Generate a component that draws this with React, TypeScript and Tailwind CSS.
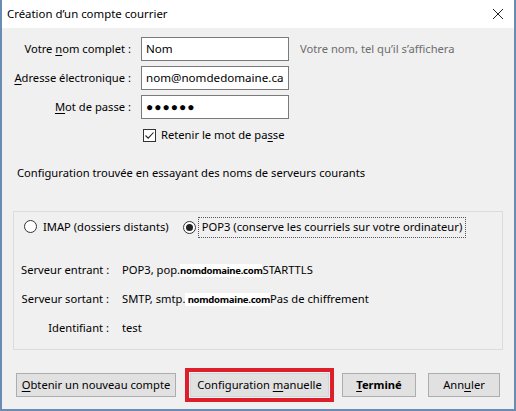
import React from 'react';

const U: React.FC<{ children: React.ReactNode }> = ({ children }) => (
  <span className="underline underline-offset-2">{children}</span>
);

const Field: React.FC<{ value: string; password?: boolean }> = ({ value, password }) => (
  <div className="h-[24px] w-[148px] bg-white border border-[#7a7a7a] flex items-center px-[4px] text-black text-[11.6px] whitespace-nowrap overflow-hidden">
    {password ? <span className="tracking-[1px] text-[12px] leading-none">●●●●●●</span> : value}
  </div>
);

const Btn: React.FC<{ children: React.ReactNode; className?: string }> = ({ children, className }) => (
  <div
    className={`h-[24px] flex items-center justify-center bg-[#e1e1e1] border border-[#adadad] text-black whitespace-nowrap ${className ?? ''}`}
  >
    {children}
  </div>
);

// the domain was painted over in the screenshot, with a smaller bold font on white
const Redacted: React.FC<{ text: string }> = ({ text }) => (
  <span className="bg-white font-bold text-[9.6px] tracking-[-0.3px]">{text}</span>
);

export default function App() {
  return (
    <div
      className="w-[516px] h-[411px] flex flex-col border-x-2 border-b-2 border-[#6b8cb2] bg-[#f0f0f0] text-[11.2px] text-black overflow-hidden whitespace-nowrap"
      style={{ fontFamily: '"Noto Sans", sans-serif' }}
    >
      {/* title bar */}
      <div className="h-[28px] bg-white flex items-center justify-between pl-[5px] pr-[10px] shrink-0">
        <span className="text-[11.4px]">Création d’un compte courrier</span>
        <svg width="12" height="12" viewBox="0 0 12 12">
          <path d="M1 1 L11 11 M11 1 L1 11" stroke="#222" strokeWidth="1" />
        </svg>
      </div>

      {/* identity form */}
      <div className="grid grid-cols-[127px_148px_auto] gap-x-[10px] gap-y-[5px] pt-[9px] pl-[2px] items-center">
        <div className="text-right">
          Votre <U>n</U>om complet :
        </div>
        <Field value="Nom" />
        <div className="text-[#6d6d6d] pl-[1px]">Votre nom, tel qu’il s’affichera</div>

        <div className="text-right">
          <U>A</U>dresse électronique :
        </div>
        <Field value="nom@nomdedomaine.ca" />
        <div />

        <div className="text-right">
          <U>M</U>ot de passe :
        </div>
        <Field value="" password />
        <div />
      </div>

      <div className="flex items-center gap-[5px] pl-[141px] mt-[9px] h-[14px]">
        <div className="w-[13px] h-[13px] border border-[#333] bg-white flex items-center justify-center">
          <svg width="11" height="11" viewBox="0 0 11 11">
            <path d="M1.5 5.5 L4.2 8.2 L9.5 2.5" stroke="#222" strokeWidth="1.1" fill="none" />
          </svg>
        </div>
        <span>
          Retenir le mot de pa<U>s</U>se
        </span>
      </div>

      <div className="pl-[15px] mt-[23px] h-[16px] flex items-center">
        Configuration trouvée en essayant des noms de serveurs courants
      </div>

      {/* group box */}
      <div className="mx-[11px] mt-[30px] h-[139px] border border-[#dcdcdc] flex flex-col">
        <div className="flex items-center mt-[4px] pl-[10px] h-[22px]">
          <div className="flex items-center gap-[6px]">
            <span className="w-[13px] h-[13px] rounded-full border border-[#333] bg-white" />
            <span>IMAP (dossiers distants)</span>
          </div>
          <div className="flex items-center gap-[2px] ml-[14px]">
            <span className="w-[13px] h-[13px] rounded-full border border-[#333] bg-white flex items-center justify-center">
              <span className="w-[7px] h-[7px] rounded-full bg-[#222]" />
            </span>
            <span className="border border-dotted border-[#555] px-[3px] h-[21px] flex items-center">
              POP3 (conserve les courriels sur votre ordinateur)
            </span>
          </div>
        </div>

        <div className="grid grid-cols-[88px_auto] auto-rows-[18px] gap-x-[13px] gap-y-[11px] mt-[23px] pl-[7px] items-center">
          <div className="text-right">Serveur entrant :</div>
          <div>
            POP3, pop.<Redacted text="nomdomaine.com" />STARTTLS
          </div>
          <div className="text-right">Serveur sortant :</div>
          <div>
            SMTP, smtp.<Redacted text=" nomdomaine.com" />Pas de chiffrement
          </div>
          <div className="text-right">Identifiant :</div>
          <div>test</div>
        </div>
      </div>

      {/* buttons */}
      <div className="flex items-center mt-[18px] pl-[14px]">
        <Btn className="w-[160px]">
          <span>
            <U>O</U>btenir un nouveau compte
          </span>
        </Btn>
        <div className="ml-[9px] border-[4px] border-[#dd1f2b] p-[1px]">
          <Btn className="w-[139px] border-[#d4d4d4]">
            <span>
              Configuration <U>m</U>anuelle
            </span>
          </Btn>
        </div>
        <Btn className="w-[74px] ml-[8px] font-bold">
          <span>
            <U>T</U>erminé
          </span>
        </Btn>
        <Btn className="w-[72px] ml-[12px]">
          <span>
            Ann<U>u</U>ler
          </span>
        </Btn>
      </div>
    </div>
  );
}
